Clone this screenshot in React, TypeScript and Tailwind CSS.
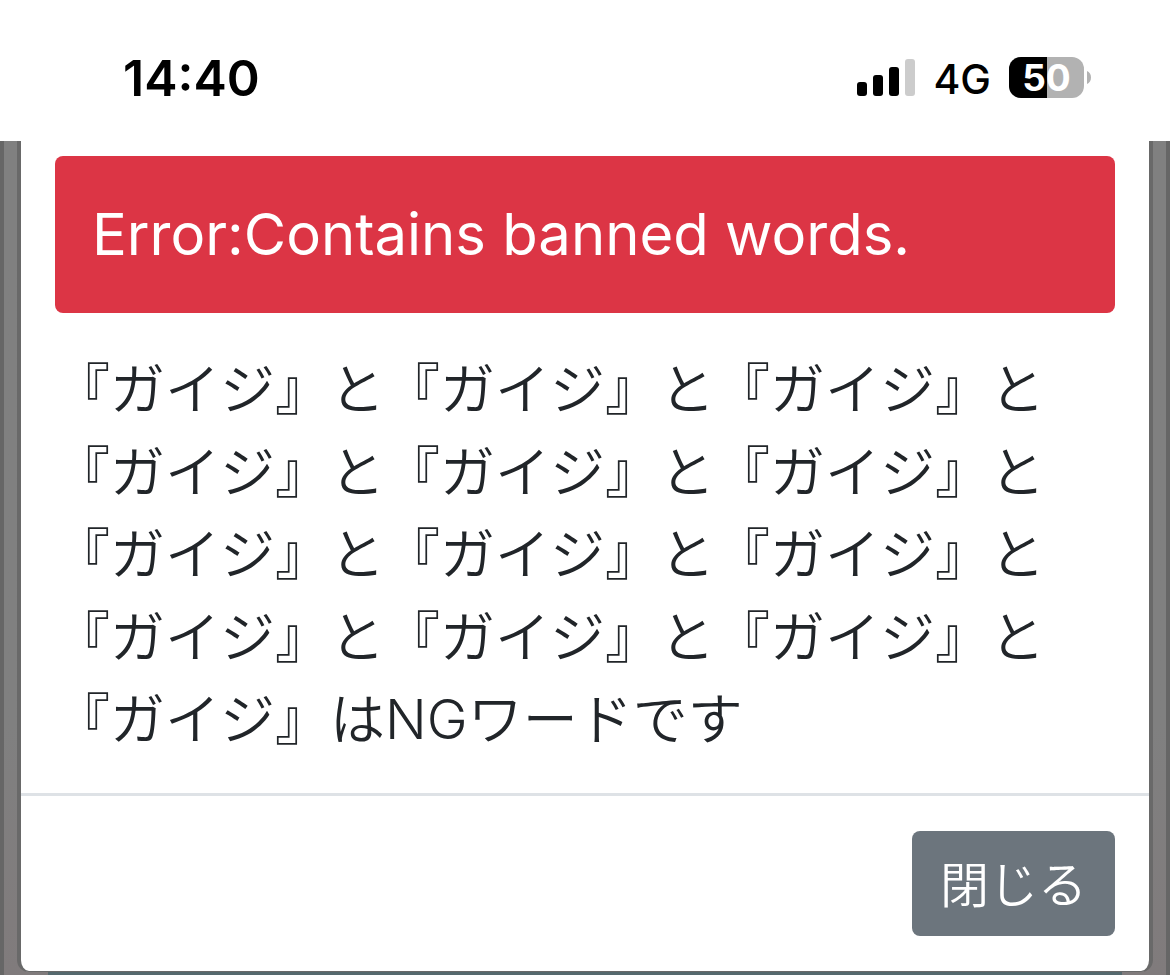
import { useState } from 'react';

const BANNED_WORD = '『ガイジ』';
const BANNED_COUNT = 13;

function SignalIcon() {
  return (
    <svg width="58" height="37" viewBox="0 0 58 37" aria-hidden="true">
      <rect x="0" y="23" width="10" height="14" rx="3" fill="#000" />
      <rect x="16" y="16" width="10" height="21" rx="3" fill="#000" />
      <rect x="32" y="8" width="10" height="29" rx="3" fill="#000" />
      <rect x="48" y="0" width="10" height="37" rx="3" fill="#ccc" />
    </svg>
  );
}

function Battery({ level }: { level: number }) {
  return (
    <div className="flex items-center gap-[3px]">
      <div className="relative w-[75px] h-[41px] rounded-xl bg-[#b2b2b2]">
        <div className="h-full rounded-l-xl bg-black" style={{ width: `${level}%` }} />
        <span className="absolute inset-0 text-center text-[37px] leading-[41px] font-bold text-white">
          {level}
        </span>
      </div>
      <svg width="4" height="13" viewBox="0 0 4 13" aria-hidden="true">
        <path d="M0 0C2.500 1 4 3.500 4 6.500S2.500 12 0 13Z" fill="#b2b2b2" />
      </svg>
    </div>
  );
}

function StatusBar() {
  return (
    <header className="flex items-center justify-between h-[141px] pt-[14px] pl-[123px] pr-[79px] bg-white text-black font-['Inter',sans-serif]">
      <time className="text-[50px] leading-none font-semibold">14:40</time>
      <div className="flex items-center gap-[18px]">
        <SignalIcon />
        <span className="pt-0.5 text-[41px] leading-[44px] font-medium">4G</span>
        <Battery level={50} />
      </div>
    </header>
  );
}

export default function App() {
  const [open, setOpen] = useState(true);
  const message = Array(BANNED_COUNT).fill(BANNED_WORD).join('と') + 'はNGワードです';

  return (
    <div className="min-h-screen flex flex-col bg-white">
      <StatusBar />
      <main className="flex-1 flex flex-col border-x-4 border-[#666] bg-linear-to-b from-[#808080] from-70% to-[#807b7c]">
        {open && (
          <div
            role="dialog"
            aria-label="Error"
            className="mx-[13px] border-x-4 border-b border-[#696969] rounded-b-xl bg-white text-[#212529] text-[55px] leading-normal font-['Inter','Noto_Sans_CJK_JP',sans-serif] font-[350]"
          >
            <div className="px-[34px] pt-[15px] pb-8">
              <p
                role="alert"
                className="mb-[35px] px-[37px] py-[37px] rounded-lg bg-[#dc3545] text-white text-[58px] leading-[83px] font-normal"
              >
                Error:Contains banned words.
              </p>
              <p>{message}</p>
            </div>
            <div className="flex justify-end px-[34px] py-[35px] border-t-3 border-[#dee2e6]">
              <button
                type="button"
                onClick={() => setOpen(false)}
                className="px-7 pt-1 h-[105px] rounded-lg bg-[#6c757d] text-white text-[49px] leading-none cursor-pointer"
              >
                閉じる
              </button>
            </div>
          </div>
        )}
        <div className="flex-1 mx-11 bg-[#55696e]" />
      </main>
    </div>
  );
}
